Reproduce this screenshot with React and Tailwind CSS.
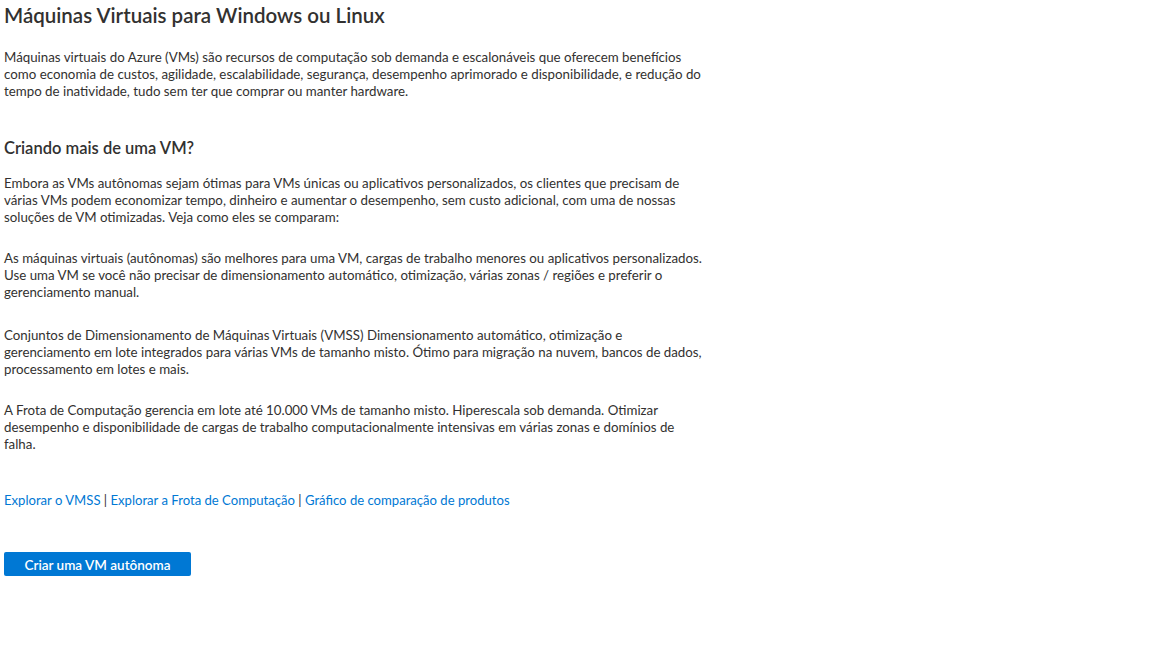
import React from "react";

const paragraphs = [
  [
    "Embora as VMs autônomas sejam ótimas para VMs únicas ou aplicativos personalizados, os clientes que precisam de",
    "várias VMs podem economizar tempo, dinheiro e aumentar o desempenho, sem custo adicional, com uma de nossas",
    "soluções de VM otimizadas. Veja como eles se comparam:",
  ],
  [
    "As máquinas virtuais (autônomas) são melhores para uma VM, cargas de trabalho menores ou aplicativos personalizados.",
    "Use uma VM se você não precisar de dimensionamento automático, otimização, várias zonas / regiões e preferir o",
    "gerenciamento manual.",
  ],
  [
    "Conjuntos de Dimensionamento de Máquinas Virtuais (VMSS) Dimensionamento automático, otimização e",
    "gerenciamento em lote integrados para várias VMs de tamanho misto. Ótimo para migração na nuvem, bancos de dados,",
    "processamento em lotes e mais.",
  ],
  [
    "A Frota de Computação gerencia em lote até 10.000 VMs de tamanho misto. Hiperescala sob demanda. Otimizar",
    "desempenho e disponibilidade de cargas de trabalho computacionalmente intensivas em várias zonas e domínios de",
    "falha.",
  ],
];

function Lines({ lines, className = "" }) {
  return (
    <p className={"text-[13.3px] leading-[17px] text-[#323130] " + className}>
      {lines.map((l, i) => (
        <span key={i} className="block whitespace-nowrap">
          {l}
        </span>
      ))}
    </p>
  );
}

export default function App() {
  return (
    <div className="min-h-[648px] w-full bg-white px-1 pt-px font-['Lato','Open_Sans',sans-serif]">
      <h1 className="text-[20.5px] font-semibold leading-[28px] text-[#323130]">
        Máquinas Virtuais para Windows ou Linux
      </h1>

      <Lines
        className="mt-[20px]"
        lines={[
          "Máquinas virtuais do Azure (VMs) são recursos de computação sob demanda e escalonáveis que oferecem benefícios",
          "como economia de custos, agilidade, escalabilidade, segurança, desempenho aprimorado e disponibilidade, e redução do",
          "tempo de inatividade, tudo sem ter que comprar ou manter hardware.",
        ]}
      />

      <h2 className="mt-[38px] text-[16.5px] font-semibold leading-[20px] text-[#323130]">
        Criando mais de uma VM?
      </h2>

      <Lines className="mt-[17px]" lines={paragraphs[0]} />
      <Lines className="mt-[24px]" lines={paragraphs[1]} />
      <Lines className="mt-[26px]" lines={paragraphs[2]} />
      <Lines className="mt-[24px]" lines={paragraphs[3]} />

      <div className="mt-[39px] text-[13.1px] leading-[17px] text-[#323130]">
        <a href="#" className="text-[#0078d4]">Explorar o VMSS</a> |{" "}
        <a href="#" className="text-[#0078d4]">Explorar a Frota de Computação</a> |{" "}
        <a href="#" className="text-[#0078d4]">Gráfico de comparação de produtos</a>
      </div>

      <button className="mt-[43px] flex h-[24px] w-[187px] items-center justify-center rounded-[2px] bg-[#0078d4] pt-[2px] text-[13.5px] font-semibold text-white">
        Criar uma VM autônoma
      </button>
    </div>
  );
}
